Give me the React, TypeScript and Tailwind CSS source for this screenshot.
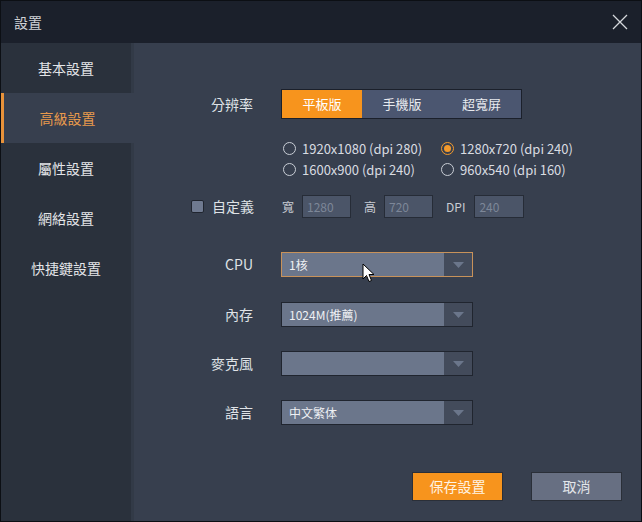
import React from "react";

const font = { fontFamily: '"Noto Sans CJK TC", "Noto Sans", sans-serif' };

function Radio({ checked, label }: { checked?: boolean; label: string }) {
  return (
    <div className="flex items-center h-[21px]">
      <span
        className={`w-[13px] h-[13px] rounded-full border flex items-center justify-center ${
          checked ? "border-[#f39a2c]" : "border-[#c9ced6]"
        }`}
      >
        {checked && <span className="w-[7px] h-[7px] rounded-full bg-[#f39a2c]" />}
      </span>
      <span className="ml-[6px] text-[13px] text-[#d9dce1]">{label}</span>
    </div>
  );
}

function Select({ value, focused }: { value: string; focused?: boolean }) {
  return (
    <div
      className={`w-[192px] h-[25px] flex border ${
        focused ? "border-[#c8925a]" : "border-[#20252f]"
      }`}
    >
      <div className="flex-1 bg-[#6b768b] text-[12px] text-[#eef0f3] pl-[7px] leading-[23px]">
        {value}
      </div>
      <div className="w-[28px] bg-[#434b5b] flex items-center justify-center">
        <svg width="11" height="6" viewBox="0 0 11 6">
          <path d="M0 0 L11 0 L5.5 6 Z" fill="#6b768b" />
        </svg>
      </div>
    </div>
  );
}

function Row({ label, children, mt }: { label: string; children: React.ReactNode; mt: string }) {
  return (
    <div className={`flex items-center ${mt}`}>
      <div className="w-[120px] text-right pr-[1px] text-[14px] text-[#dfe2e6]">{label}</div>
      <div className="ml-[27px]">{children}</div>
    </div>
  );
}

export default function App() {
  const items = ["基本設置", "高級設置", "屬性設置", "網絡設置", "快捷鍵設置"];
  return (
    <div style={font} className="w-[642px] h-[522px] border border-[#0c0f14] flex flex-col bg-[#373f4e] overflow-hidden relative">
      <div className="h-[42px] bg-[#1b202b] flex items-center justify-between pl-[13px] pr-[13px] shrink-0">
        <span className="text-[14px] text-[#cfd2d6]">設置</span>
        <svg width="16" height="16" viewBox="0 0 16 16">
          <path d="M1 1 L15 15 M15 1 L1 15" stroke="#d5d8dc" strokeWidth="1.3" />
        </svg>
      </div>
      <div className="flex flex-1">
        <div className="w-[133px] bg-[#2a313c] border-r-[3px] border-[#323a47] flex flex-col">
          {items.map((it, i) => (
            <div
              key={it}
              className={`h-[50px] flex items-center justify-center text-[14px] ${
                i === 1
                  ? "bg-[#373f4e] text-[#e89a4c] border-l-[3px] border-[#e8923a] -mr-[3px] pr-[3px]"
                  : "text-[#e3e5e8]"
              }`}
            >
              {it}
            </div>
          ))}
        </div>
        <div className="flex-1 flex flex-col pt-[46px] relative">
          <Row label="分辨率" mt="">
            <div className="flex h-[30px] border border-[#1b202b] text-[13px]">
              <div className="w-[80px] bg-[#f7941d] text-white flex items-center justify-center">平板版</div>
              <div className="w-[80px] bg-[#4b5670] text-[#e8eaee] flex items-center justify-center">手機版</div>
              <div className="w-[79px] bg-[#4b5670] text-[#e8eaee] flex items-center justify-center">超寬屏</div>
            </div>
          </Row>
          <div className="flex ml-[149px] mt-[19px]">
            <div className="w-[158px]">
              <Radio label="1920x1080 (dpi 280)" />
              <Radio label="1600x900 (dpi 240)" />
            </div>
            <div>
              <Radio checked label="1280x720 (dpi 240)" />
              <Radio label="960x540 (dpi 160)" />
            </div>
          </div>
          <div className="flex items-center mt-[15px] h-[23px]">
            <div className="w-[120px] flex items-center justify-end">
              <span className="w-[13px] h-[13px] bg-[#6f7a90] border border-[#20252f] rounded-[2px]" />
              <span className="ml-[8px] text-[14px] text-[#dfe2e6]">自定義</span>
            </div>
            <div className="ml-[28px] flex items-center text-[12px] text-[#c8ccd3]">
              <span>寬</span>
              <div className="ml-[8px] w-[49px] h-[23px] bg-[#4b5568] border border-[#262c37] text-[#7d8798] pl-[4px] leading-[21px]">1280</div>
              <span className="ml-[13px]">高</span>
              <div className="ml-[8px] w-[49px] h-[23px] bg-[#4b5568] border border-[#262c37] text-[#7d8798] pl-[4px] leading-[21px]">720</div>
              <span className="ml-[13px]">DPI</span>
              <div className="ml-[9px] w-[50px] h-[23px] bg-[#4b5568] border border-[#262c37] text-[#7d8798] pl-[4px] leading-[21px]">240</div>
            </div>
          </div>
          <Row label="CPU" mt="mt-[34px]">
            <Select value="1核" focused />
          </Row>
          <Row label="內存" mt="mt-[25px]">
            <Select value="1024M(推薦)" />
          </Row>
          <Row label="麥克風" mt="mt-[24px]">
            <Select value="" />
          </Row>
          <Row label="語言" mt="mt-[24px]">
            <Select value="中文繁体" />
          </Row>
          <div className="flex mt-[47px] ml-[278px] gap-[28px]">
            <div className="w-[91px] h-[29px] bg-[#f7941d] border border-[#2a2f38] text-[14px] text-[#fff3e3] flex items-center justify-center">保存設置</div>
            <div className="w-[91px] h-[29px] bg-[#676f82] border border-[#2a2f38] text-[14px] text-[#e3e6ea] flex items-center justify-center">取消</div>
          </div>
          <svg className="absolute left-[228px] top-[220px]" width="14" height="20" viewBox="0 0 14 20">
            <path d="M1 1 L1 16 L4.5 12.5 L7 18.5 L9.5 17.5 L7 11.5 L12 11.5 Z" fill="#ffffff" stroke="#000" strokeWidth="1" />
          </svg>
        </div>
      </div>
    </div>
  );
}
